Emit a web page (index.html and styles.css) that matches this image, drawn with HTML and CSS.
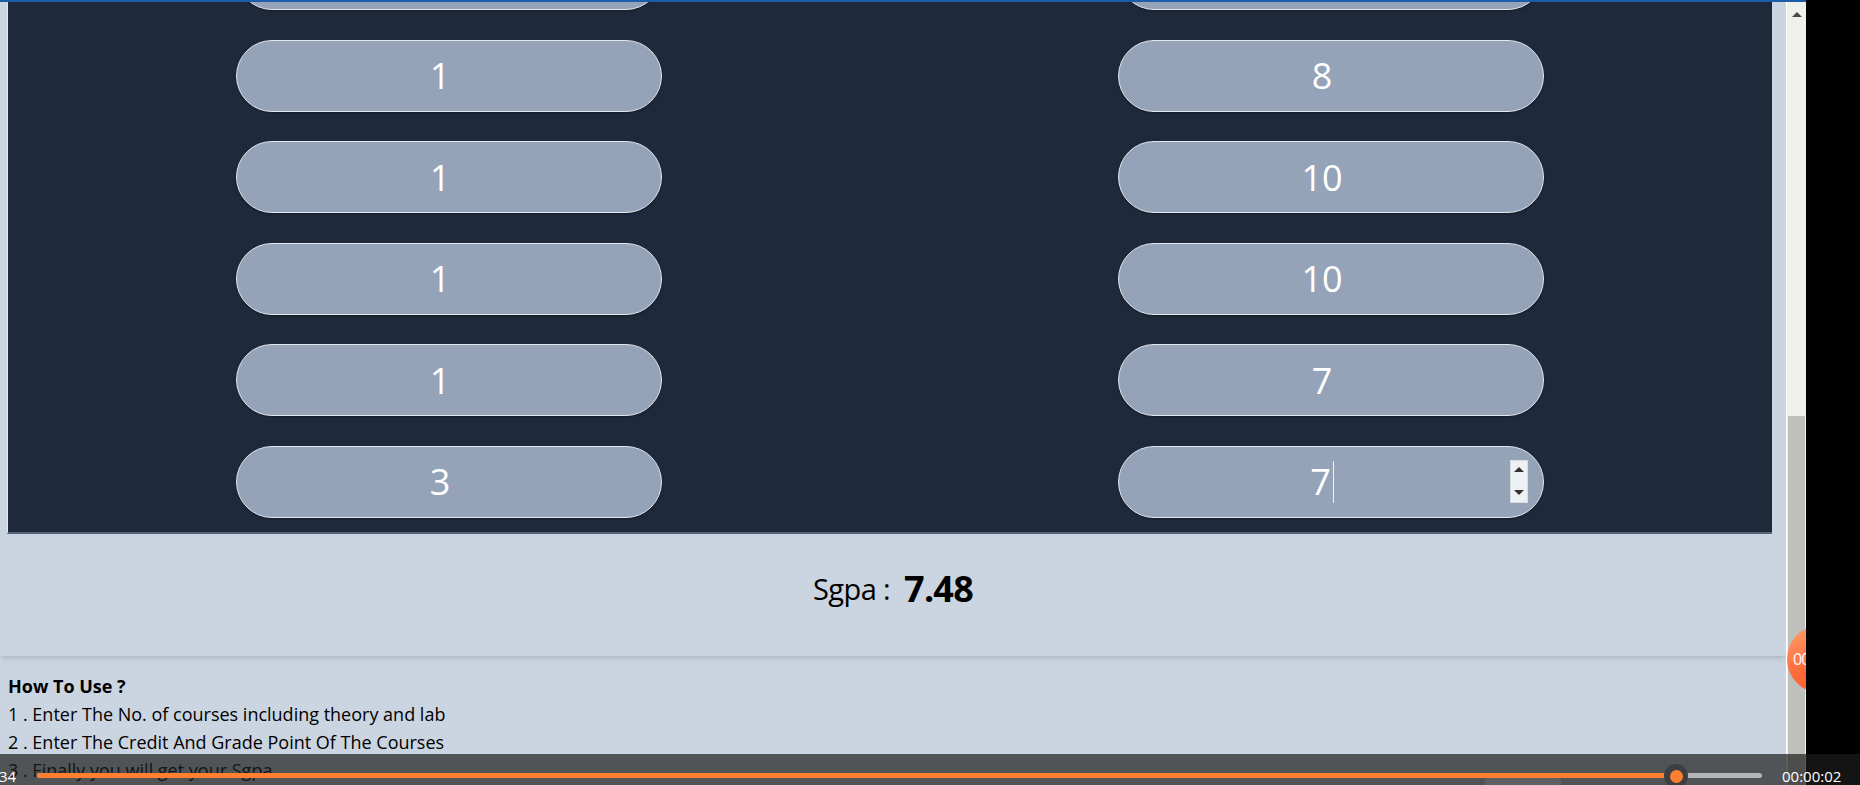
FILE: index.html
```html
<!DOCTYPE html>
<html lang="en">
<head>
<meta charset="utf-8">
<title>Sgpa Calculator</title>
<link rel="stylesheet" href="styles.css">
</head>
<body>
<div class="window">
  <div class="topbar"></div>
  <div class="viewport">
    <div class="page">
      <section class="panel">
        <div class="cell"><div class="pill"><span class="value">3</span><span class="spinner spinner-hidden"></span></div></div>
        <div class="cell"><div class="pill"><span class="value">9</span><span class="spinner spinner-hidden"></span></div></div>
        <div class="cell"><div class="pill"><span class="value">1</span><span class="spinner spinner-hidden"></span></div></div>
        <div class="cell"><div class="pill"><span class="value">8</span><span class="spinner spinner-hidden"></span></div></div>
        <div class="cell"><div class="pill"><span class="value">1</span><span class="spinner spinner-hidden"></span></div></div>
        <div class="cell"><div class="pill"><span class="value">10</span><span class="spinner spinner-hidden"></span></div></div>
        <div class="cell"><div class="pill"><span class="value">1</span><span class="spinner spinner-hidden"></span></div></div>
        <div class="cell"><div class="pill"><span class="value">10</span><span class="spinner spinner-hidden"></span></div></div>
        <div class="cell"><div class="pill"><span class="value">1</span><span class="spinner spinner-hidden"></span></div></div>
        <div class="cell"><div class="pill"><span class="value">7</span><span class="spinner spinner-hidden"></span></div></div>
        <div class="cell"><div class="pill"><span class="value">3</span><span class="spinner spinner-hidden"></span></div></div>
        <div class="cell">
          <div class="pill">
            <span class="value">7<span class="caret"></span></span>
            <span class="spinner"><span class="arrow-up"></span><span class="arrow-down"></span></span>
          </div>
        </div>
      </section>
      <section class="result">
        <span class="result-label">Sgpa :</span>
        <span class="result-value">7.48</span>
      </section>
      <section class="howto">
        <h2 class="howto-title">How To Use ?</h2>
        <p class="howto-line">1 . Enter The No. of courses including theory and lab</p>
        <p class="howto-line">2 . Enter The Credit And Grade Point Of The Courses</p>
        <p class="howto-line">3 . Finally you will get your Sgpa</p>
      </section>
    </div>
    <div class="scrollbar">
      <span class="scroll-up"></span>
      <span class="scroll-track"></span>
      <span class="scroll-thumb"></span>
    </div>
  </div>
  <div class="bubble">00</div>
</div>
<div class="black-side"></div>
<div class="player">
  <span class="player-time-left">34</span>
  <div class="player-track">
    <div class="player-fill" style="width:1639px"></div>
    <span class="player-thumb"></span>
  </div>
  <span class="player-time">00:00:02</span>
  <span class="player-tab"></span>
</div>
</body>
</html>
```

FILE: styles.css
```css
* { box-sizing: border-box; }

html, body {
  margin: 0;
  padding: 0;
  height: 785px;
  overflow: hidden;
  background: #000;
  font-family: "Open Sans", "Noto Sans", "Liberation Sans", sans-serif;
}

body {
  display: flex;
  position: relative;
}

.window {
  position: relative;
  width: 1806px;
  height: 785px;
  display: flex;
  flex-direction: column;
  overflow: hidden;
  flex: none;
}

.topbar {
  height: 2px;
  background: #1d5bab;
  flex: none;
}

.viewport {
  flex: 1;
  display: flex;
  min-height: 0;
}

.page {
  flex: 1;
  background: #cbd5e1;
  overflow: hidden;
}

.panel {
  margin: -79px 14px 0 7px;
  padding: 15px 0 14px;
  background: #1e293b;
  border-left: 1px solid #dfe6ee;
  border-bottom: 2px solid #56647a;
  display: grid;
  grid-template-columns: 1fr 1fr;
  row-gap: 29.5px;
}

.cell {
  display: flex;
  justify-content: center;
}

.pill {
  width: 426px;
  height: 72px;
  border-radius: 36px;
  background: #94a3b8;
  border: 1px solid #e2e8f0;
  box-shadow: 0 1px 2px rgba(0, 0, 0, 0.35);
  color: #fff;
  font-size: 36px;
  display: flex;
  align-items: center;
  padding: 0 15px;
}

.value {
  flex: 1;
  display: flex;
  justify-content: center;
  align-items: center;
}

.caret {
  display: inline-block;
  width: 1px;
  height: 42px;
  background: #eef2f6;
  margin-left: 2px;
}

.spinner {
  width: 18px;
  height: 43px;
  flex: none;
  background: #eef1f3;
  border: 1px solid #d5dbe1;
  display: flex;
  flex-direction: column;
  justify-content: space-between;
  align-items: center;
  padding: 6px 0 7px;
}

.spinner-hidden {
  visibility: hidden;
}

.arrow-up {
  width: 0;
  height: 0;
  border-left: 5px solid transparent;
  border-right: 5px solid transparent;
  border-bottom: 5px solid #333;
}

.arrow-down {
  width: 0;
  height: 0;
  border-left: 5px solid transparent;
  border-right: 5px solid transparent;
  border-top: 5px solid #333;
}

.result {
  height: 122px;
  display: flex;
  justify-content: center;
  align-items: center;
  gap: 14px;
  padding: 0 0 12px 0;
  color: #000;
  box-shadow: 0 4px 6px -1px rgba(0, 0, 0, 0.1), 0 2px 4px -2px rgba(0, 0, 0, 0.1);
  position: relative;
}

.result-label {
  font-size: 29px;
  line-height: 36px;
  letter-spacing: -0.6px;
}

.result-value {
  font-size: 36px;
  line-height: 40px;
  font-weight: 700;
  letter-spacing: -0.8px;
}

.howto {
  padding: 16px 8px;
  color: #000;
}

.howto-title {
  margin: 0;
  font-size: 18px;
  line-height: 28px;
  font-weight: 700;
}

.howto-line {
  margin: 0;
  font-size: 18px;
  line-height: 28px;
}

.scrollbar {
  width: 20px;
  flex: none;
  background: #eef0ec;
  border-left: 1px solid #ffffff;
  display: flex;
  flex-direction: column;
  align-items: center;
}

.scroll-up {
  margin-top: 10px;
  width: 0;
  height: 0;
  border-left: 5px solid transparent;
  border-right: 5px solid transparent;
  border-bottom: 5px solid #4a4a4a;
  flex: none;
}

.scroll-track {
  height: 399px;
  flex: none;
}

.scroll-thumb {
  flex: 1;
  width: 17px;
  background: #bfc0bb;
}

.bubble {
  position: absolute;
  left: 1787px;
  top: 625px;
  width: 68px;
  height: 68px;
  border-radius: 50%;
  background: linear-gradient(160deg, #ffa06e 0%, #ff6a3a 55%, #ff5529 100%);
  color: #fff;
  font-size: 16px;
  letter-spacing: -1px;
  line-height: 68px;
  padding-left: 6px;
}

.black-side {
  flex: 1;
  background: #000;
}

.player {
  position: absolute;
  left: 0;
  right: 0;
  bottom: 0;
  height: 31px;
  background: rgba(28, 28, 28, 0.7);
  display: flex;
  align-items: center;
  padding-top: 12px;
  color: #fff;
  font-size: 15px;
  line-height: 20px;
}

.player-time-left {
  width: 38px;
  flex: none;
  margin-left: -1px;
}

.player-track {
  position: relative;
  width: 1725px;
  height: 5px;
  border-radius: 3px;
  background: #b5b5b5;
  flex: none;
}

.player-fill {
  height: 5px;
  background: #fd7f2f;
  border-radius: 3px 0 0 3px;
}

.player-thumb {
  position: absolute;
  left: 1627px;
  top: -9px;
  width: 24px;
  height: 24px;
  border-radius: 50%;
  background: #3c3f42;
  display: flex;
  align-items: center;
  justify-content: center;
}

.player-thumb::after {
  content: "";
  width: 13px;
  height: 13px;
  border-radius: 50%;
  background: #fd7f2f;
}

.player-time {
  margin-left: 20px;
  flex: none;
}

.player-tab {
  position: absolute;
  left: 1485px;
  bottom: 0;
  width: 76px;
  height: 7px;
  border-radius: 4px 4px 0 0;
  background: rgba(255, 255, 255, 0.08);
}
```
